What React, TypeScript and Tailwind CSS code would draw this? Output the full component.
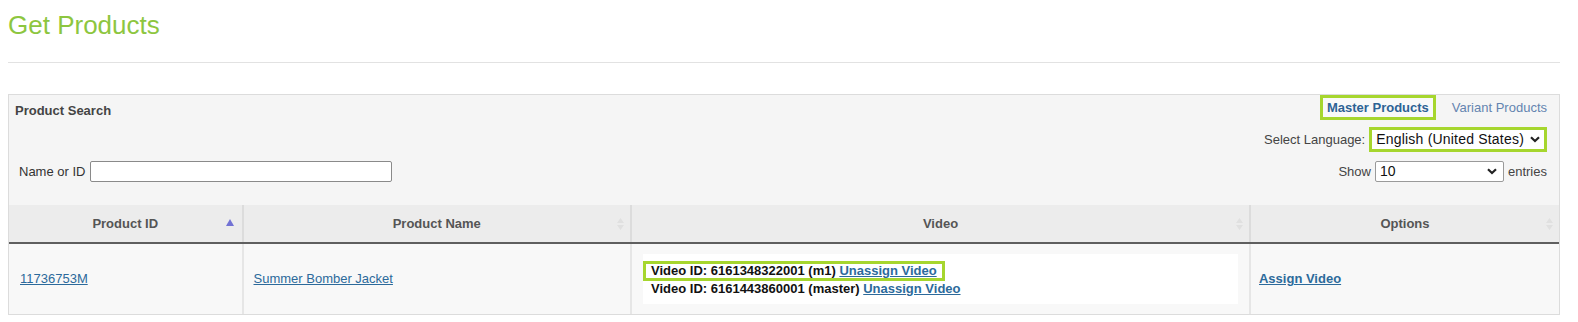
import { ReactNode } from 'react';

function SortIcon({ active }: { active?: boolean }) {
  if (active) {
    return (
      <svg width="8" height="7" viewBox="0 0 8 7" className="absolute right-[8px] top-[14px]">
        <path d="M4 0 L8 7 L0 7 Z" fill="#7272d4" />
      </svg>
    );
  }
  return (
    <svg width="7" height="12" viewBox="0 0 7 12" className="absolute right-[6px] top-[13px]">
      <path d="M3.5 0 L7 5 L0 5 Z M3.5 12 L7 7 L0 7 Z" fill="#e0e0e0" />
    </svg>
  );
}

function Chevron() {
  return (
    <svg width="10" height="7" viewBox="0 0 10 7" className="shrink-0">
      <path d="M1 1.2 L5 5 L9 1.2" fill="none" stroke="#222" strokeWidth="2.2" />
    </svg>
  );
}

function Th({ children, active, last }: { children: ReactNode; active?: boolean; last?: boolean }) {
  return (
    <th
      className={`relative h-[38px] border-b-2 border-b-[#5f5f5f] text-center align-middle text-[13px] font-bold text-[#555] ${
        last ? '' : 'border-r-2 border-r-[#dcdcdc]'
      }`}
    >
      {children}
      <SortIcon active={active} />
    </th>
  );
}

function Link({ children, bold }: { children: ReactNode; bold?: boolean }) {
  return (
    <a href="#" className={`text-[#2c6a9b] underline ${bold ? 'font-bold' : ''}`}>
      {children}
    </a>
  );
}

export default function App() {
  return (
    <div className="bg-white pl-2 pr-[18px] pt-[10px] pb-2 font-['Liberation_Sans',Arial,sans-serif] text-[13px] text-[#333]">
      <h1 className="text-[26px] leading-[30px] text-[#8dc63f]">Get Products</h1>
      <hr className="mt-[22px] border-t border-[#e2e2e2]" />

      <div className="mt-[31px] border border-[#dcdcdc] bg-[#f5f5f5]">
        <div className="flex justify-between pl-[6px] pr-[12px]">
          <div className="flex flex-col">
            <div className="pt-[8px] text-[13px] font-bold leading-[15px] text-[#444]">Product Search</div>
            <div className="mt-[43px] flex items-center gap-[5px] pl-[4px]">
              <span>Name or ID</span>
              <input className="h-[21px] w-[302px] rounded-[2px] border border-[#8a8a8a] bg-white" />
            </div>
          </div>

          <div className="flex flex-col items-end">
            <div className="flex items-center gap-[16px]">
              <span className="border-[3px] border-[#a6d62e] bg-[#f9f9f9] px-[4px] py-[2px] font-bold leading-[15px] text-[#2d6395]">
                Master Products
              </span>
              <span className="leading-[15px] text-[#6484b0]">Variant Products</span>
            </div>
            <div className="mt-[7px] flex items-center gap-[4px]">
              <span className="text-[#444]">Select Language:</span>
              <div className="flex h-[25px] items-center gap-[6px] border-[3px] border-[#a6d62e] bg-white pl-[4px] pr-[4px] text-[14px] tracking-[0.2px] text-[#111]">
                <span>English (United States)</span>
                <Chevron />
              </div>
            </div>
            <div className="mt-[9px] flex items-center gap-[4px]">
              <span className="text-[#444]">Show</span>
              <div className="flex h-[21px] w-[129px] items-center justify-between rounded-[2px] border border-[#9a9a9a] bg-white pl-[4px] pr-[6px] text-[14px] text-[#111]">
                <span>10</span>
                <Chevron />
              </div>
              <span className="text-[#444]">entries</span>
            </div>
          </div>
        </div>

        <table className="mt-[23px] w-full table-fixed border-collapse">
          <colgroup>
            <col className="w-[232px]" />
            <col className="w-[386px]" />
            <col className="w-[615px]" />
            <col className="w-[307px]" />
          </colgroup>
          <thead className="bg-[#ececec]">
            <tr>
              <Th active>Product ID</Th>
              <Th>Product Name</Th>
              <Th>Video</Th>
              <Th last>Options</Th>
            </tr>
          </thead>
          <tbody className="bg-[#f8f8f8]">
            <tr className="h-[69px]">
              <td className="border-r-2 border-r-[#e6e6e6] pl-[11px] align-middle">
                <Link>11736753M</Link>
              </td>
              <td className="border-r-2 border-r-[#e6e6e6] pl-[10px] align-middle">
                <Link>Summer Bomber Jacket</Link>
              </td>
              <td className="border-r-2 border-r-[#e6e6e6] px-[11px] py-[10px] align-middle">
                <div className="flex h-[50px] flex-col justify-center bg-white text-[13px] font-bold leading-[17px] text-[#111]">
                  <div className="self-start border-[3px] border-[#a6d62e] px-[5px] leading-[14px]">
                    Video ID: 6161348322001 (m1) <Link bold>Unassign Video</Link>
                  </div>
                  <div className="-mt-[1px] pl-[8px]">
                    Video ID: 6161443860001 (master) <Link bold>Unassign Video</Link>
                  </div>
                </div>
              </td>
              <td className="pl-[8px] align-middle">
                <Link bold>Assign Video</Link>
              </td>
            </tr>
          </tbody>
        </table>
      </div>
    </div>
  );
}
